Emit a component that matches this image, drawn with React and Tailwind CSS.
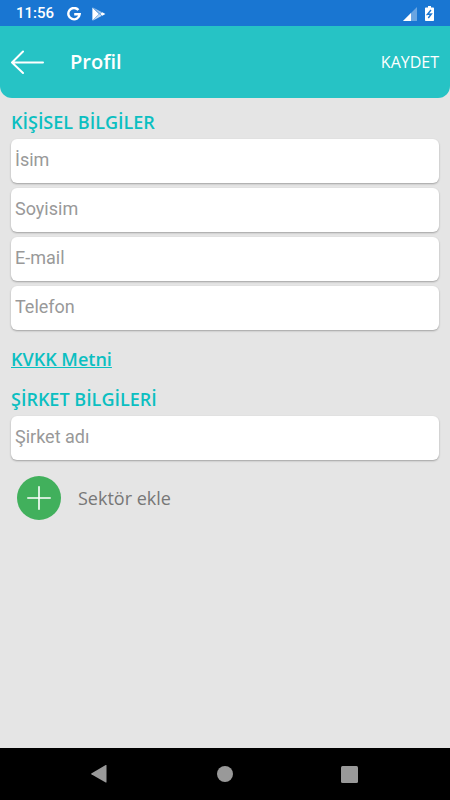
import React, { useState } from 'react';

const StatusBar = () => (
  <div className="flex h-[26px] items-center justify-between bg-[#1976d2] pt-px pr-4 pl-4 text-white">
    <div className="flex items-center">
      <span className="w-[51px] font-['Roboto',sans-serif] text-[15px] font-medium">11:56</span>
      <svg className="h-[14px] w-[14px]" viewBox="0 0 14 14" fill="none" stroke="currentColor" strokeWidth="2.4">
        <path d="M11.4 3A5.7 5.7 0 1 0 12.7 7.2H7.2" />
      </svg>
      <svg className="ml-[11px] h-[14px] w-[14px]" viewBox="0 0 14 14">
        <path d="M.4.6v12.8L7 7z" fill="#fff" />
        <path d="M.6.2 10 5.2 7.6 7z" fill="#fff" fillOpacity=".6" />
        <path d="M.6 13.8 10 8.8 7.4 7z" fill="#fff" fillOpacity=".75" />
        <path d="M10.3 5.3 13.4 7l-3.1 1.7L8 7z" fill="#fff" />
        <path d="M1.500 1 10 9" stroke="#1976d2" strokeOpacity=".5" strokeWidth=".6" />
      </svg>
    </div>
    <div className="flex items-center gap-2">
      <svg className="h-[14px] w-[14px]" viewBox="0 0 14 14">
        <path d="M14 0v14H0z" fill="#fff" fillOpacity=".35" />
        <path d="M8 6v8H0z" fill="#fff" />
      </svg>
      <svg className="h-[15px] w-[9px]" viewBox="0 0 9 15">
        <path d="M3 0h3v1.500h2.200q.8 0 .8.8v11.900q0 .8-.8.8H.8Q0 15 0 14.200V2.300q0-.8.8-.8H3z" fill="#fff" />
        <path d="M6 4 2.400 8.300 6.300 8 3.300 12" fill="none" stroke="#1976d2" strokeWidth="1.400" />
      </svg>
    </div>
  </div>
);

const Header = () => (
  <header className="flex h-[72px] items-center rounded-b-xl bg-[#26c3c5] px-[11px] text-white">
    <button type="button" aria-label="Geri" className="w-[59px]">
      <svg className="h-6 w-[34px]" viewBox="0 0 34 24" fill="none" stroke="currentColor" strokeWidth="2" strokeLinecap="round" strokeLinejoin="round">
        <path d="M32 12.500H1M12 1.500 1 12.500l11 10.500" />
      </svg>
    </button>
    <h1 className="flex-1 text-xl font-[550]">Profil</h1>
    <button type="button" className="text-base">KAYDET</button>
  </header>
);

const Field = ({ name, label, type = 'text', value, onChange }) => (
  <input
    type={type}
    name={name}
    aria-label={label}
    placeholder={label}
    value={value}
    onChange={onChange}
    className="block h-11 w-full rounded-md bg-white px-1 pb-[3px] font-['Roboto',sans-serif] text-lg text-gray-700 shadow-[0_1px_2px_rgba(0,0,0,0.3)] outline-none placeholder:text-[#999]"
  />
);

const SectionTitle = ({ children }) => (
  <h2 className="text-lg leading-6 font-[550] text-[#0bbfc1]">{children}</h2>
);

const NavBar = () => (
  <nav className="grid h-[52px] grid-cols-3 bg-black px-[38px] text-[#999]">
    <button type="button" aria-label="Geri" className="flex items-center justify-center">
      <svg className="h-5 w-5" viewBox="0 0 20 20" fill="currentColor">
        <path d="M16.500 1.500v16.500q0 .8-.8.400L1.300 10.200q-.6-.4 0-.8L15.700 1.100q.8-.4.8.4z" />
      </svg>
    </button>
    <button type="button" aria-label="Ana ekran" className="flex items-center justify-center">
      <svg className="h-4 w-4" viewBox="0 0 16 16" fill="currentColor">
        <circle cx="8" cy="8" r="8" />
      </svg>
    </button>
    <button type="button" aria-label="Son uygulamalar" className="flex items-center justify-center">
      <svg className="h-[17px] w-[17px]" viewBox="0 0 17 17" fill="currentColor">
        <rect width="17" height="17" rx="1.500" />
      </svg>
    </button>
  </nav>
);

const App = () => {
  const [form, setForm] = useState({ isim: '', soyisim: '', email: '', telefon: '', sirket: '' });

  const handleChange = (e) => {
    setForm({ ...form, [e.target.name]: e.target.value });
  };

  return (
    <div className="flex min-h-screen flex-col bg-[#e5e5e5] font-['Open_Sans',sans-serif]">
      <StatusBar />
      <Header />

      <main className="flex-1 px-[11px] pt-3">
        <SectionTitle>KİŞİSEL BİLGİLER</SectionTitle>
        <div className="mt-[5px] flex flex-col gap-[5px]">
          <Field name="isim" label="İsim" value={form.isim} onChange={handleChange} />
          <Field name="soyisim" label="Soyisim" value={form.soyisim} onChange={handleChange} />
          <Field name="email" label="E-mail" type="email" value={form.email} onChange={handleChange} />
          <Field name="telefon" label="Telefon" type="tel" value={form.telefon} onChange={handleChange} />
        </div>

        <a href="#kvkk" className="mt-[17px] mb-4 block w-fit text-lg leading-6 font-[550] text-[#0bbfc1] underline">
          KVKK Metni
        </a>

        <SectionTitle>ŞİRKET BİLGİLERİ</SectionTitle>
        <div className="mt-[5px]">
          <Field name="sirket" label="Şirket adı" value={form.sirket} onChange={handleChange} />
        </div>

        <button type="button" className="mt-4 ml-[6px] flex items-center gap-[17px] text-lg text-[#777]">
          <span className="flex h-11 w-11 items-center justify-center rounded-full bg-[#41b05c]">
            <svg className="h-6 w-6" viewBox="0 0 24 24" stroke="#fff" strokeWidth="1.600" strokeLinecap="round">
              <path d="M12 .8v22.400M.8 12h22.400" />
            </svg>
          </span>
          Sektör ekle
        </button>
      </main>

      <NavBar />
    </div>
  );
};

export default App;
